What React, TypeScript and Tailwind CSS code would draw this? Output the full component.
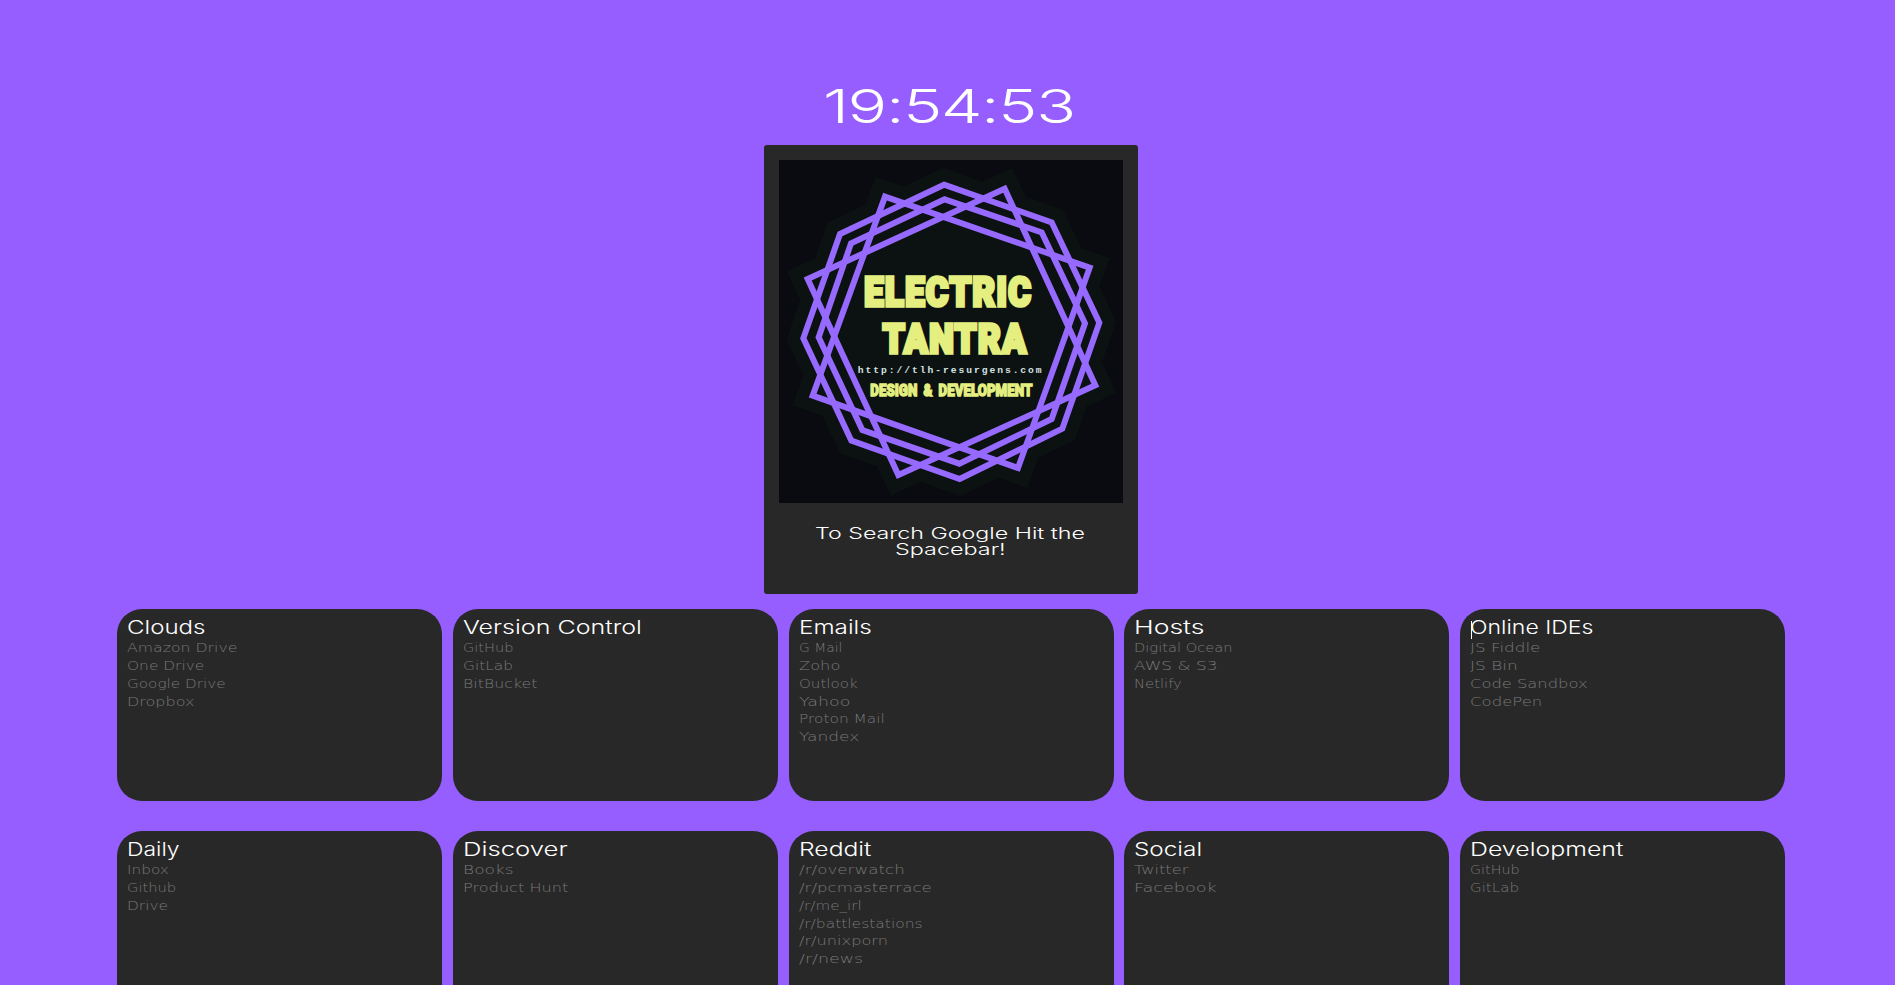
import { useLayoutEffect, useRef, useState } from "react";

function Wide({ text, width, className = "" }: { text: string; width: number; className?: string }) {
  const ref = useRef<HTMLSpanElement>(null);
  const [scale, setScale] = useState(1);
  useLayoutEffect(() => {
    if (ref.current) setScale(width / ref.current.offsetWidth);
  }, [width, text]);
  return (
    <span className="block" style={{ width }}>
      <span
        ref={ref}
        className={`inline-block origin-left whitespace-nowrap align-top ${className}`}
        style={{ transform: `scaleX(${scale})` }}
      >
        {text}
      </span>
    </span>
  );
}

type Item = [string, number];
type Group = { title: Item; links: Item[]; caret?: boolean };

const groups: Group[] = [
  { title: ["Clouds", 79], links: [["Amazon Drive", 110], ["One Drive", 77], ["Google Drive", 99], ["Dropbox", 68]] },
  { title: ["Version Control", 179], links: [["GitHub", 51], ["GitLab", 50], ["BitBucket", 75]] },
  {
    title: ["Emails", 73],
    links: [["G Mail", 44], ["Zoho", 42], ["Outlook", 59], ["Yahoo", 51], ["Proton Mail", 86], ["Yandex", 61]],
  },
  { title: ["Hosts", 70], links: [["Digital Ocean", 99], ["AWS & S3", 83], ["Netlify", 48]] },
  {
    title: ["Online IDEs", 124],
    caret: true,
    links: [["JS Fiddle", 70], ["JS Bin", 48], ["Code Sandbox", 117], ["CodePen", 73]],
  },
  { title: ["Daily", 53], links: [["Inbox", 42], ["Github", 49], ["Drive", 41]] },
  { title: ["Discover", 105], links: [["Books", 51], ["Product Hunt", 105]] },
  {
    title: ["Reddit", 73],
    links: [
      ["/r/overwatch", 106],
      ["/r/pcmasterrace", 133],
      ["/r/me_irl", 63],
      ["/r/battlestations", 124],
      ["/r/unixporn", 89],
      ["/r/news", 64],
    ],
  },
  { title: ["Social", 68], links: [["Twitter", 54], ["Facebook", 82]] },
  { title: ["Development", 154], links: [["GitHub", 50], ["GitLab", 49]] },
];

const shapes = [
  "495,74 818,187 961,488 850,806 542,957 217,842 73,535 183,222",
  "497,118 788,217 918,490 818,777 541,911 250,810 119,532 216,250",
  "677,86 949,676 358,945 86,357",
  "318,110 932,323 717,924 101,707",
];

function Logo() {
  return (
    <svg viewBox="0 0 1032 1029" preserveAspectRatio="none" className="block h-[343px] w-[344px] bg-[#090b10]">
      <g fill="#0c1211" stroke="#0c1211" strokeWidth="94" strokeLinejoin="miter">
        {shapes.map((p) => (
          <polygon key={p} points={p} />
        ))}
      </g>
      <g fill="none" stroke="#976aff" strokeWidth="18" strokeLinejoin="miter">
        {shapes.map((p) => (
          <polygon key={p} points={p} />
        ))}
      </g>
      <g fill="#e5ef80" stroke="#e5ef80" strokeLinejoin="miter" className="font-[Roboto,sans-serif] font-black">
        <text x="256" y="437" fontSize="121" strokeWidth="11" textLength="504" lengthAdjust="spacingAndGlyphs" letterSpacing="5">
          ELECTRIC
        </text>
        <text x="311" y="580" fontSize="121" strokeWidth="11" textLength="434" lengthAdjust="spacingAndGlyphs" letterSpacing="5">
          TANTRA
        </text>
        <text x="274" y="707" fontSize="47" strokeWidth="4" textLength="486" lengthAdjust="spacingAndGlyphs" wordSpacing="10">
          DESIGN &amp; DEVELOPMENT
        </text>
      </g>
      <text
        x="236"
        y="640"
        fontSize="29"
        fill="#d3e2e0"
        textLength="552"
        className="font-['Liberation_Mono',monospace] font-bold"
      >
        http://tlh-resurgens.com
      </text>
    </svg>
  );
}

function Card({ group }: { group: Group }) {
  return (
    <section className="relative h-48 rounded-[25px] bg-[#282828] pt-[6.5px] pl-[10px]">
      {group.caret && <span className="absolute top-3 left-[11px] h-[18px] w-px bg-white" />}
      <h2 className="mb-[2.8px] font-[Inter,sans-serif] text-[18.6px] leading-[22px] font-light text-white">
        <Wide text={group.title[0]} width={group.title[1]} />
      </h2>
      <ul className="font-['DejaVu_Sans',sans-serif] text-[12px] leading-[17.75px] font-extralight text-[#787878]">
        {group.links.map(([name, width]) => (
          <li key={name} className="h-[17.75px]">
            <Wide text={name} width={width} />
          </li>
        ))}
      </ul>
    </section>
  );
}

export default function App() {
  return (
    <main className="flex h-[985px] flex-col items-center overflow-hidden bg-[#965eff] pt-[76px] pl-[7px]">
      <h1 className="mr-[5px] mb-[9px] h-[60px] shrink-0 font-[Inter,sans-serif] text-[46.8px] leading-[60px] font-[350] text-white">
        <Wide text="19:54:53" width={252} className="tracking-[-0.02em]" />
      </h1>
      <div className="flex h-[449px] w-[374px] shrink-0 flex-col items-center rounded-[3px] bg-[#282828] pt-[15px]">
        <Logo />
        <div className="mt-[22px] mr-[2px] flex flex-col items-center font-[Inter,sans-serif] text-[16px] leading-4 font-light text-white">
          <Wide text="To Search Google Hit the" width={270} />
          <Wide text="Spacebar!" width={111} />
        </div>
      </div>
      <div className="mt-[15px] grid w-[1668px] shrink-0 grid-cols-5 gap-x-[10.75px] gap-y-[30px]">
        {groups.map((g) => (
          <Card key={g.title[0]} group={g} />
        ))}
      </div>
    </main>
  );
}
